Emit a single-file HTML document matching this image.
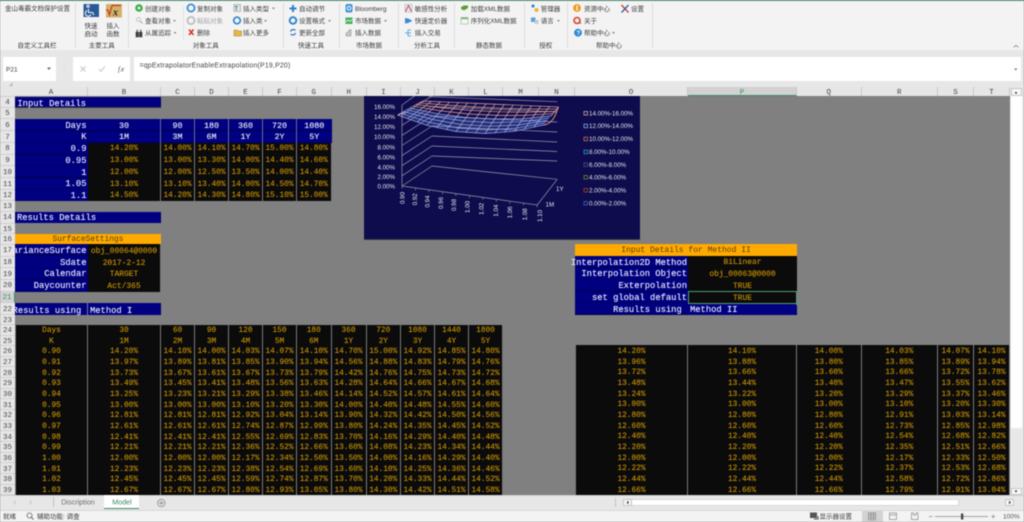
<!DOCTYPE html>
<html><head><meta charset="utf-8"><style>
html,body{margin:0;padding:0;width:1024px;height:522px;overflow:hidden;background:#808080}
#w{position:relative;width:1024px;height:522px;overflow:hidden;filter:blur(.45px);font-family:"Liberation Mono",monospace}
#w div{position:absolute;box-sizing:border-box}
.n{background:#000080;color:#f0f0ff;font-size:8.8px;white-space:nowrap;padding-top:1.5px;-webkit-text-stroke:.1px #f0f0ff}
.k{background:#0b0b0b;color:#cb9405;font-size:7.8px;text-align:center;white-space:pre-line;border-right:1px solid #7a7a7a;-webkit-text-stroke:.1px #cb9405}
.t{top:324.7px;height:170.3px;line-height:10.67px;padding-top:1.4px}
.r{top:345px;height:150px;line-height:10.67px;padding-top:2.1px}
.u{top:143px;height:58px;line-height:11.75px;padding-top:1.3px}
.o{background:#ffaa00;color:#5a3e00;font-size:7.9px;text-align:center;padding-top:1.2px}
.rh{left:0;width:15px;background:#e6e6e6;color:#444;font-size:7.5px;text-align:center;border-bottom:1px solid #cfcfcf;padding-top:1.4px}
.ch{top:87px;height:9px;background:#e6e6e6;color:#444;font-size:7.5px;line-height:12px;text-align:center;border-right:1px solid #c8c8c8}
svg{position:absolute;left:0;top:0;overflow:visible}
.zh text{font-family:"Liberation Sans","Noto Sans CJK SC",sans-serif;font-size:6.5px;fill:#3c3c3c}
</style></head><body><div id="w">

<!-- ribbon -->
<div style="left:0;top:0;width:1024px;height:50px;background:#f3f3f3"></div>
<div style="left:0;top:0;width:1024px;height:1px;background:#5f9c80"></div>
<div style="left:0;top:50px;width:1024px;height:37px;background:#e7e7e7"></div>
<div style="left:3px;top:57px;width:53px;height:24px;background:#fff"></div>
<div style="left:73px;top:57px;width:57px;height:24px;background:#fff"></div>
<div style="left:133.5px;top:57px;width:887px;height:24px;background:#fff"></div>

<svg width="1024" height="96" class="zh">
 <g stroke="#dcdcdc" stroke-width="1"><path d="M75.5 3V48M128.5 3V48M283.5 3V48M339.5 3V48M398.5 3V48M454.5 3V48M524.5 3V48M567.5 3V48M652.5 3V48"/></g>
 <path d="M183.5 6V40M64.5 66V71" stroke="#e2e2e2"/>
 <text x="5" y="10.5">金山毒霸文档保护设置</text>
 <g text-anchor="middle">
  <text x="37" y="47.5">自定义工具栏</text><text x="101.7" y="47.5">主要工具</text><text x="205.7" y="47.5">对象工具</text><text x="311" y="47.5">快速工具</text><text x="369" y="47.5">市场数据</text><text x="427" y="47.5">分析工具</text><text x="489" y="47.5">静态数据</text><text x="545.7" y="47.5">授权</text><text x="609" y="47.5">帮助中心</text>
  <text x="91" y="27.8">快速</text><text x="91" y="36.2">启动</text><text x="113" y="27.8">插入</text><text x="113" y="36.2">函数</text>
 </g>
 <text x="145" y="10.8">创建对象</text><text x="145" y="23">查看对象</text><text x="145" y="35">从属追踪</text>
 <text x="197" y="10.8">复制对象</text><text x="197" y="23" style="fill:#a5a5a5">粘贴对象</text><text x="197" y="35">删除</text>
 <text x="243" y="10.8">插入类型</text><text x="243" y="23">插入类</text><text x="243" y="35">插入更多</text>
 <text x="299" y="10.8">自动调节</text><text x="299" y="23">设置格式</text><text x="299" y="35">更新全部</text>
 <text x="355" y="10.8">Bloomberg</text><text x="355" y="23">市场数据</text><text x="355" y="35">插入数据</text>
 <text x="414.7" y="10.8">敏感性分析</text><text x="414.7" y="23">快速定价器</text><text x="414.7" y="35">插入交易</text>
 <text x="470.7" y="10.8">加载XML数据</text><text x="470.7" y="23">序列化XML数据</text>
 <text x="540.7" y="10.8">管理器</text><text x="540.7" y="23">语言</text>
 <text x="584" y="10.8">资源中心</text><text x="584" y="23">关于</text><text x="584" y="35">帮助中心</text>
 <text x="631" y="10.8">设置</text>
 <g fill="#8a8a8a"><path d="M173 20l3 0-1.500 2zM173.500 32l3 0-1.500 2zM272 7.500l3 0-1.500 2zM264 20l3 0-1.500 2zM328 20l3 0-1.500 2zM384 20l3 0-1.500 2zM557 20l3 0-1.500 2zM612 32l3 0-1.500 2zM47 68l3.500 0-1.750 2z"/></g>
 <rect x="83.500" y="4" width="15.500" height="13" fill="#2a5a96"/>
 <path d="M88 7.500a1.200 1.200 0 1 1 .1 0M88.500 9v3.500h4l1.500 2.500M87 10.500a3 3 0 1 0 4 4" stroke="#eef3fa" stroke-width="1.100" fill="none"/>
 <rect x="106" y="4" width="16" height="13.500" fill="#d6b06a"/>
 <path d="M106 10h2l1.500 5 2.500-9.500h9" stroke="#b8431c" stroke-width="1.200" fill="none"/>
 <text x="113" y="15.500" style="font-family:'Liberation Serif',serif;font-size:10px;font-weight:bold;font-style:italic;fill:#2a2a10">x</text>
 <circle cx="139" cy="8" r="3.800" fill="#3fae49"/><circle cx="139" cy="8" r="1.400" fill="#e8f7ea"/>
 <circle cx="138.500" cy="19.500" r="2" fill="none" stroke="#bcc7d2"/><path d="M140 21l2.500 2.500" stroke="#b0b0b0" stroke-width="1.200"/>
 <path d="M136 37v-5h2.500v5zM139.500 37v-5h2.500v5zM137 32v-2h1M141 32v-2h-1" fill="#3a3a3a" stroke="#3a3a3a" stroke-width=".6"/>
 <circle cx="191" cy="8" r="3.600" fill="none" stroke="#3c8fd6" stroke-width="1.800"/>
 <circle cx="191" cy="20.500" r="3.600" fill="none" stroke="#bdbdbd" stroke-width="1.800"/>
 <path d="M189 29.500l4.500 5.500M193.500 29.500l-4.500 5.500" stroke="#d8301f" stroke-width="1.500"/>
 <rect x="234" y="4.500" width="6.500" height="7" fill="#e6e6e6" stroke="#9a9a9a" stroke-width=".6"/><text x="234.500" y="10.500" style="font-size:6px;fill:#2d7f8a;font-weight:bold">T</text>
 <circle cx="237" cy="20.500" r="3.300" fill="none" stroke="#2f84d0" stroke-width="1.700"/>
 <path d="M234 30h3l1 1h3.500v5H234z" fill="#e4b64e" stroke="#a87c1f" stroke-width=".5"/>
 <path d="M293 5v7M289.500 8.500h7" stroke="#2e7fd0" stroke-width="2"/>
 <circle cx="293" cy="20.500" r="3.300" fill="none" stroke="#2f84d0" stroke-width="1.900"/>
 <path d="M290.500 31.500a3 3 0 0 1 5-1M295.500 33a3 3 0 0 1-5 1" stroke="#2b78c8" stroke-width="1.200" fill="none"/>
 <rect x="345.500" y="4" width="7" height="8.500" rx="2" fill="#3d92d8"/><circle cx="349" cy="8.200" r="1.800" fill="none" stroke="#fff"/>
 <rect x="345.500" y="17.500" width="7" height="6.500" fill="#45b05a"/><path d="M346 22l2-2 2 1.500 2-2" stroke="#fff" stroke-width=".7" fill="none"/>
 <path d="M346 36v-3l2-1 1-2 2-.5v6.500z" fill="#c6c6c6" stroke="#888" stroke-width=".5"/>
 <rect x="405" y="4.500" width="7" height="7.500" fill="#e8e8f2" stroke="#9aa0c0" stroke-width=".5"/><path d="M405.500 11.500l3-6 3 6" stroke="#c8403a" fill="none" stroke-width=".9"/>
 <path d="M405 18l3 .5 3 1.500 1.500 .7-1.500 .8-3 1.500-3 .5z" fill="#3c88d4"/>
 <path d="M405 33h3M408 30v6M408 30h3M408 36h3M408 33h3" stroke="#62a8de" stroke-width="1" fill="none"/>
 <path d="M461 7l3-1.500h4v2.500l-4 2.500-3-1.500z" fill="#5d9e38"/>
 <rect x="461" y="17.500" width="7" height="6.500" fill="#f4f4f4" stroke="#a9a9a9" stroke-width=".6"/><rect x="461" y="17.500" width="7" height="1.600" fill="#6fb36a"/>
 <circle cx="533" cy="6" r="1.600" fill="#2f8ad6"/><circle cx="536.500" cy="10" r="2" fill="#e9b33c"/>
 <rect x="531" y="17.500" width="4.500" height="4.500" fill="#5aa1d8"/><rect x="534.500" y="20" width="4" height="4" fill="#c2ccd6"/>
 <circle cx="577" cy="8" r="3.900" fill="#ee9a1e"/><rect x="576.400" y="5.500" width="1.200" height="5" fill="#fff"/>
 <circle cx="577" cy="20.500" r="3" fill="none" stroke="#d8432d" stroke-width="1.600"/><path d="M579 22l2 1.500" stroke="#d8432d" stroke-width="1.300"/>
 <circle cx="578" cy="32.700" r="3.900" fill="#2e88d4"/><text x="576.500" y="35" style="font-size:6px;fill:#fff;font-weight:bold">?</text>
 <path d="M621.500 5l7 7.500" stroke="#d8362a" stroke-width="1.300"/><path d="M628.500 5l-7 7.500" stroke="#2a62b0" stroke-width="1.300"/>
 <path d="M1013.500 47.500l2.500-2.200 2.500 2.200" stroke="#8a8a8a" fill="none" stroke-width=".8"/>
 <text x="6" y="71.500" style="font-size:6.500px">P21</text>
 <path d="M47.500 67.500h3.500l-1.750 2z" fill="#666"/>
 <path d="M80.500 66.500l5 5M85.500 66.500l-5 5" stroke="#c2c2c2" stroke-width=".9"/>
 <path d="M99 69l2 2.300 4-5" stroke="#c2c2c2" stroke-width=".9" fill="none"/>
 <text x="118" y="71.500" style="font-family:'Liberation Serif',serif;font-style:italic;font-size:7px;fill:#555">f𝑥</text>
 <text x="139.500" y="67.400" style="font-size:6.900px;fill:#444;letter-spacing:.22px">=qpExtrapolatorEnableExtrapolation(P19,P20)</text>
 <path d="M1014 68.500h3.500l-1.750 2z" fill="#777"/>
 <path d="M9 86l3.500-3.500V86z" fill="#b4b4b4"/>
</svg>

<!-- column headers -->
<div style="left:0;top:87px;width:15px;height:9px;background:#e6e6e6"></div>
<div class="ch" style="left:15px;width:73px">A</div><div class="ch" style="left:88px;width:73px">B</div><div class="ch" style="left:161px;width:34px">C</div><div class="ch" style="left:195px;width:34px">D</div><div class="ch" style="left:229px;width:34px">E</div><div class="ch" style="left:263px;width:34px">F</div><div class="ch" style="left:297px;width:34.500px">G</div><div class="ch" style="left:331.500px;width:35.500px">H</div><div class="ch" style="left:367px;width:34px">I</div><div class="ch" style="left:401px;width:34px">J</div><div class="ch" style="left:435px;width:34px">K</div><div class="ch" style="left:469px;width:34px">L</div><div class="ch" style="left:503px;width:36px">M</div><div class="ch" style="left:539px;width:36px">N</div><div class="ch" style="left:575px;width:113px">O</div>
<div class="ch" style="left:688px;width:109px;background:#d2d2d2;color:#3d8a62;border-bottom:1px solid #3d8a62">P</div>
<div class="ch" style="left:797px;width:64.500px">Q</div><div class="ch" style="left:861.500px;width:76.500px">R</div><div class="ch" style="left:938px;width:36px">S</div><div class="ch" style="left:974px;width:36px">T</div>

<!-- gray sheet -->
<div style="left:15px;top:96px;width:995px;height:399px;background:#808080"></div>

<!-- input details -->
<div class="n" style="left:15px;top:97px;width:146px;height:11px;line-height:11px;padding-left:2.400px;border-bottom:1px solid #3a3a3a">Input Details</div>
<div class="n" style="left:15px;top:119px;width:73px;height:82px;text-align:right;padding-right:1.500px;line-height:11.750px;white-space:pre-line;background-image:repeating-linear-gradient(#000080 0 11px,#00004c 11px 11.750px)">Days
K
0.9
0.95
1
1.05
1.1</div>
<div class="n" style="left:88px;top:119px;width:243.500px;height:24px;padding:0;background-image:repeating-linear-gradient(#000080 0 11px,#00004c 11px 11.750px)"></div>
<div class="n" style="left:88px;top:119px;width:73px;height:24px;text-align:center;font-size:8.400px;line-height:11.750px;white-space:pre-line;background:none;border-right:1px solid #6a6a90">30
1M</div>
<div class="n" style="left:161px;top:119px;width:34px;height:24px;text-align:center;font-size:8.400px;line-height:11.750px;white-space:pre-line;background:none;border-right:1px solid #6a6a90">90
3M</div>
<div class="n" style="left:195px;top:119px;width:34px;height:24px;text-align:center;font-size:8.400px;line-height:11.750px;white-space:pre-line;background:none;border-right:1px solid #6a6a90">180
6M</div>
<div class="n" style="left:229px;top:119px;width:34px;height:24px;text-align:center;font-size:8.400px;line-height:11.750px;white-space:pre-line;background:none;border-right:1px solid #6a6a90">360
1Y</div>
<div class="n" style="left:263px;top:119px;width:34px;height:24px;text-align:center;font-size:8.400px;line-height:11.750px;white-space:pre-line;background:none;border-right:1px solid #6a6a90">720
2Y</div>
<div class="n" style="left:297px;top:119px;width:34.500px;height:24px;text-align:center;font-size:8.400px;line-height:11.750px;white-space:pre-line;background:none">1080
5Y</div>
<div class="k u" style="left:88px;width:73px">14.20%
13.00%
12.00%
13.10%
14.50%</div>
<div class="k u" style="left:161px;width:34px">14.00%
13.00%
12.00%
13.10%
14.20%</div>
<div class="k u" style="left:195px;width:34px">14.10%
13.30%
12.50%
13.40%
14.30%</div>
<div class="k u" style="left:229px;width:34px">14.70%
14.00%
13.50%
14.00%
14.80%</div>
<div class="k u" style="left:263px;width:34px">15.00%
14.40%
14.00%
14.50%
15.10%</div>
<div class="k u" style="left:297px;width:34.500px">14.80%
14.60%
14.40%
14.70%
15.00%</div>

<!-- results details -->
<div class="n" style="left:15px;top:211.500px;width:146px;height:11.500px;line-height:11.500px;padding-left:2px">Results Details</div>
<div class="o" style="left:15px;top:233.500px;width:146px;height:10.500px;line-height:10px">SurfaceSettings</div>
<div class="n" style="left:15px;top:244px;width:73px;height:47.500px;overflow:hidden;line-height:11.750px;padding-top:0;background-image:repeating-linear-gradient(#000080 0 11px,#00004c 11px 11.750px)"><div style="right:1.500px;top:1.800px;text-align:right;white-space:pre-line">VarianceSurface
Sdate
Calendar
Daycounter</div></div>
<div class="k" style="left:88px;top:244px;width:73px;height:47.500px;line-height:11.750px;padding-top:1.800px;font-size:7.900px">obj_00064@0000
2017-2-12
TARGET
Act/365</div>
<div class="n" style="left:15px;top:303px;width:73px;height:12px;line-height:12px;overflow:hidden;padding-top:0;border-right:1px solid #7a7a9a"><div style="right:.5px;top:1.500px">Results using&nbsp;</div></div>
<div class="n" style="left:88px;top:303px;width:73px;height:12px;line-height:12px;padding-left:2px">Method I</div>

<!-- method 1 table -->
<div class="k t" style="left:15px;width:73px;border-left:1px solid #7a7a7a">Days
K
0.90
0.91
0.92
0.93
0.94
0.95
0.96
0.97
0.98
0.99
1.00
1.01
1.02
1.03</div>
<div class="k t" style="left:88px;width:73px">30
1M
14.20%
13.97%
13.73%
13.49%
13.25%
13.00%
12.81%
12.61%
12.41%
12.21%
12.00%
12.23%
12.45%
12.67%</div>
<div class="k t" style="left:161px;width:34px">60
2M
14.10%
13.89%
13.67%
13.45%
13.23%
13.00%
12.81%
12.61%
12.41%
12.21%
12.00%
12.23%
12.45%
12.67%</div>
<div class="k t" style="left:195px;width:34px">90
3M
14.00%
13.81%
13.61%
13.41%
13.21%
13.00%
12.81%
12.61%
12.41%
12.21%
12.00%
12.23%
12.45%
12.67%</div>
<div class="k t" style="left:229px;width:34px">120
4M
14.03%
13.85%
13.67%
13.48%
13.29%
13.10%
12.92%
12.74%
12.55%
12.36%
12.17%
12.38%
12.59%
12.80%</div>
<div class="k t" style="left:263px;width:34px">150
5M
14.07%
13.90%
13.73%
13.56%
13.38%
13.20%
13.04%
12.87%
12.69%
12.52%
12.34%
12.54%
12.74%
12.93%</div>
<div class="k t" style="left:297px;width:34.500px">180
6M
14.10%
13.94%
13.79%
13.63%
13.46%
13.30%
13.14%
12.99%
12.83%
12.66%
12.50%
12.69%
12.87%
13.05%</div>
<div class="k t" style="left:331.500px;width:35px">360
1Y
14.70%
14.56%
14.42%
14.28%
14.14%
14.00%
13.90%
13.80%
13.70%
13.60%
13.50%
13.60%
13.70%
13.80%</div>
<div class="k t" style="left:366.500px;width:34.500px">720
2Y
15.00%
14.88%
14.76%
14.64%
14.52%
14.40%
14.32%
14.24%
14.16%
14.08%
14.00%
14.10%
14.20%
14.30%</div>
<div class="k t" style="left:401px;width:34px">1080
3Y
14.92%
14.83%
14.75%
14.66%
14.57%
14.48%
14.42%
14.35%
14.29%
14.23%
14.16%
14.25%
14.33%
14.42%</div>
<div class="k t" style="left:435px;width:34px">1440
4Y
14.85%
14.79%
14.73%
14.67%
14.61%
14.55%
14.50%
14.45%
14.40%
14.34%
14.29%
14.36%
14.44%
14.51%</div>
<div class="k t" style="left:469px;width:34px">1800
5Y
14.80%
14.76%
14.72%
14.68%
14.64%
14.60%
14.56%
14.52%
14.48%
14.44%
14.40%
14.46%
14.52%
14.58%</div>

<!-- chart -->
<div style="left:363.500px;top:96px;width:276.500px;height:144px;background:#0e0c4c;overflow:hidden;border-bottom:1px solid #3a3a3a">
<svg width="277" height="144" viewBox="363.500 96 277 144" style="font-family:'Liberation Sans',sans-serif">
 <g stroke="#9a9ab0" stroke-width=".7" fill="none">
  <path d="M401.500 105L428 86M401.500 115.200L431.500 96M401.500 125.300L431.500 106M401.500 135.400L431.500 116M401.500 145.500L431.500 126M401.500 155.600L431.500 136M401.500 165.700L431.500 146M401.500 175.800L431.500 156M401.500 186L431.500 166"/>
  <path d="M428 96.700L556.700 101.700M431.500 106.500L556.700 112M431.500 116L556.700 122M431.500 126L556.700 132M431.500 136L556.700 142M431.500 146L556.700 151.500M431.500 156L556.700 161M431.500 166L556.700 179.300"/>
  <path d="M401.500 105V186M401.500 186L536.700 205L556.700 179.300"/>
 </g>
 <path d="M401.700 186.500v2M415 188.400v2M428.500 190.300v2M442 192.200v2M455.300 194v2M469 196v2M482.300 197.800v2M495.800 199.700v2M509.300 201.600v2M523 203.500v2M536.700 205.300v2" stroke="#9d9db4" stroke-width=".6"/>
 <path d="M409.500 108L437.600 113.800L465.700 117.500L494.100 119L522.400 118.600L550.500 116L543 125L513.800 131.300L484.600 133.500L455.400 131.500L426.200 125.300L397 115z" fill="#6f8fdc" fill-opacity=".24"/>
 <g stroke="#e8a296" stroke-width=".7" fill="none">
  <path d="M422 101L449 102.200L476 103.400L503.600 104.600L531 105.800L558 107"/>
  <path d="M418.800 102.800L446.100 105.100L473.400 106.900L501.200 108.200L528.800 109L556 109.200"/>
  <path d="M415.700 104.500L443.300 108L470.800 110.400L498.800 111.800L526.700 112.200L554.200 111.500"/>
  <path d="M412.600 106.200L440.400 110.900L468.200 114L496.400 115.400L524.500 115.400L552.300 113.700"/>
  <path d="M422 101L409.500 108M431 101.400L418.900 110.200M440 101.800L428.300 112M449 102.200L437.600 113.800M458 102.600L447 115.300M467 103L456.400 116.500M476 103.400L465.700 117.500M485.500 103.800L475.300 118.300M494.500 104.200L484.700 118.700M503.600 104.600L494.100 119M512.700 105L503.500 119.200M521.800 105.400L512.900 119M531 105.800L522.400 118.600M540 106.200L531.800 118M549 106.600L541.100 117M558 107L550.500 116"/>
 </g>
 <g stroke="#94aaf0" stroke-width=".7" fill="none">
  <path d="M409.500 108L437.600 113.800L465.700 117.500L494.100 119L522.400 118.600L550.500 116"/>
  <path d="M406.300 109.700L434.700 116.600L463.100 121L491.700 122.600L520.200 121.800L548.600 118.200"/>
  <path d="M403.200 111.500L431.900 119.500L460.500 124.500L489.300 126.200L518.100 125L546.700 120.500"/>
  <path d="M400 113.200L429 122.400L458 128L487 129.900L516 128.200L544.800 122.700"/>
  <path d="M397 115L426.200 125.300L455.400 131.500L484.600 133.500L513.800 131.300L543 125"/>
  <path d="M409.500 108L397 115M418.900 110.200L406.700 118.900M428.300 112L416.500 122.300M437.600 113.800L426.200 125.300M447 115.300L436 127.900M456.400 116.500L445.700 129.900M465.700 117.500L455.400 131.500M475.300 118.300L465.100 132.700M484.700 118.700L474.800 133.200M494.100 119L484.600 133.500M503.500 119.200L494.300 133.300M512.900 119L504 132.500M522.400 118.600L513.800 131.300M531.800 118L523.500 129.700M541.100 117L533.200 127.500"/>
 </g>
 <path d="M543 125Q552 124 556 112L558 107" stroke="#e8a296" stroke-width=".9" fill="none"/>
 <path d="M397 115L405 112" stroke="#e8a296" stroke-width=".9"/>
 <g fill="#e4e4ee" font-size="6.200" text-anchor="end">
  <text x="394.500" y="108.800">16.00%</text><text x="394.500" y="119">14.00%</text><text x="394.500" y="129.100">12.00%</text><text x="394.500" y="139.200">10.00%</text><text x="394.500" y="149.300">8.00%</text><text x="394.500" y="159.400">6.00%</text><text x="394.500" y="169.500">4.00%</text><text x="394.500" y="179.200">2.00%</text><text x="394.500" y="188.300">0.00%</text>
 </g>
 <g fill="#e4e4ee" font-size="6.200" text-anchor="middle">
  <text transform="translate(403.800 198) rotate(-90)">0.90</text><text transform="translate(416.300 199.300) rotate(-90)">0.92</text><text transform="translate(429 201.500) rotate(-90)">0.94</text><text transform="translate(442.300 203) rotate(-90)">0.96</text><text transform="translate(455.500 205) rotate(-90)">0.98</text><text transform="translate(469 207) rotate(-90)">1.00</text><text transform="translate(483 208.800) rotate(-90)">1.02</text><text transform="translate(497.300 210.600) rotate(-90)">1.04</text><text transform="translate(511.600 212.300) rotate(-90)">1.06</text><text transform="translate(526.300 214.300) rotate(-90)">1.08</text><text transform="translate(541.300 216) rotate(-90)">1.10</text>
 </g>
 <g fill="#e4e4ee" font-size="6.200">
  <text x="545" y="206.500">1M</text><text x="555.500" y="191">1Y</text>
  <text x="588.500" y="115.500">14.00%-16.00%</text><text x="588.500" y="128.200">12.00%-14.00%</text><text x="588.500" y="141.200">10.00%-12.00%</text><text x="588.500" y="154.200">8.00%-10.00%</text><text x="588.500" y="166.900">6.00%-8.00%</text><text x="588.500" y="179.500">4.00%-6.00%</text><text x="588.500" y="192.500">2.00%-4.00%</text><text x="588.500" y="205.500">0.00%-2.00%</text>
 </g>
 <g fill="none" stroke-width=".8">
  <rect x="583.500" y="111.500" width="3.500" height="3.500" stroke="#d9a8a8"/><rect x="583.500" y="124.200" width="3.500" height="3.500" stroke="#8fa6ea"/><rect x="583.500" y="137.200" width="3.500" height="3.500" stroke="#c0765a"/><rect x="583.500" y="150.200" width="3.500" height="3.500" stroke="#3c9ac0"/><rect x="583.500" y="162.900" width="3.500" height="3.500" stroke="#5a4a8c"/><rect x="583.500" y="175.500" width="3.500" height="3.500" stroke="#6a8a3c"/><rect x="583.500" y="188.500" width="3.500" height="3.500" stroke="#a0403c"/><rect x="583.500" y="201.500" width="3.500" height="3.500" stroke="#3c68b4"/>
 </g>
</svg></div>

<!-- method 2 settings -->
<div class="o" style="left:575px;top:243.500px;width:222px;height:12px;line-height:11px;font-size:8px">Input Details for Method II</div>
<div class="n" style="left:575px;top:255.500px;width:113px;height:59px;line-height:11.750px;padding:0;background-image:repeating-linear-gradient(#000080 0 11px,#00004c 11px 11.750px)"></div>
<div style="right:337px;top:257.500px;text-align:right;white-space:pre-line;line-height:11.750px;color:#f0f0ff;font-size:8.800px;-webkit-text-stroke:.1px #f0f0ff">Interpolation2D Method
Interpolation Object
Exterpolation
set global default
Results using&nbsp;</div>
<div class="k" style="left:688px;top:255.500px;width:109px;height:47px;line-height:11.750px;padding-top:1.800px;font-size:7.900px;border-right:0">BiLinear
obj_00063@0000
TRUE
TRUE</div>
<div class="n" style="left:688px;top:303px;width:109px;height:11.500px;line-height:11.500px;padding-left:2px">Method II</div>
<div style="left:688px;top:291px;width:109px;height:12.500px;border:1.200px solid #4e9e78"></div>
<div style="left:795.500px;top:302px;width:2.500px;height:2.500px;background:#4e9e78"></div>

<!-- method 2 table -->
<div class="k r" style="left:575px;width:113px;border-left:1px solid #7a7a7a">14.20%
13.96%
13.72%
13.48%
13.24%
13.00%
12.80%
12.60%
12.40%
12.20%
12.00%
12.22%
12.44%
12.66%</div>
<div class="k r" style="left:688px;width:109px">14.10%
13.88%
13.66%
13.44%
13.22%
13.00%
12.80%
12.60%
12.40%
12.20%
12.00%
12.22%
12.44%
12.66%</div>
<div class="k r" style="left:797px;width:64.500px">14.00%
13.80%
13.60%
13.40%
13.20%
13.00%
12.80%
12.60%
12.40%
12.20%
12.00%
12.22%
12.44%
12.66%</div>
<div class="k r" style="left:861.500px;width:76.500px">14.03%
13.85%
13.66%
13.47%
13.29%
13.10%
12.91%
12.73%
12.54%
12.35%
12.17%
12.37%
12.58%
12.79%</div>
<div class="k r" style="left:938px;width:36px">14.07%
13.89%
13.72%
13.55%
13.37%
13.20%
13.03%
12.85%
12.68%
12.51%
12.33%
12.53%
12.72%
12.91%</div>
<div class="k r" style="left:974px;width:36px">14.10%
13.94%
13.78%
13.62%
13.46%
13.30%
13.14%
12.98%
12.82%
12.66%
12.50%
12.68%
12.86%
13.04%</div>

<!-- row headers -->
<div class="rh" style="top:97px;height:11px;line-height:11px">4</div><div class="rh" style="top:108px;height:11px;line-height:11px">5</div><div class="rh" style="top:119px;height:12px;line-height:12px">6</div><div class="rh" style="top:131px;height:12px;line-height:12px">7</div><div class="rh" style="top:143px;height:11.500px;line-height:11.500px">8</div><div class="rh" style="top:154.500px;height:11.500px;line-height:11.500px">9</div><div class="rh" style="top:166px;height:12px;line-height:12px">10</div><div class="rh" style="top:178px;height:12px;line-height:12px">11</div><div class="rh" style="top:190px;height:11px;line-height:11px">12</div><div class="rh" style="top:201px;height:11px;line-height:11px">13</div><div class="rh" style="top:212px;height:11.500px;line-height:11.500px">14</div><div class="rh" style="top:223.500px;height:10.500px;line-height:10.500px">15</div><div class="rh" style="top:234px;height:11px;line-height:11px">16</div><div class="rh" style="top:245px;height:11.500px;line-height:11.500px">17</div><div class="rh" style="top:256.500px;height:11.500px;line-height:11.500px">18</div><div class="rh" style="top:268px;height:12px;line-height:12px">19</div><div class="rh" style="top:280px;height:11.500px;line-height:11.500px">20</div>
<div class="rh" style="top:291.500px;height:11.500px;line-height:11.500px;background:#d2d2d2;color:#3d8a62;border-right:1px solid #3d8a62">21</div>
<div class="rh" style="top:303px;height:12px;line-height:12px">22</div><div class="rh" style="top:315px;height:10px;line-height:10px">23</div><div class="rh" style="top:325px;height:10.500px;line-height:10.500px">24</div><div class="rh" style="top:335.500px;height:10.500px;line-height:10.500px">25</div><div class="rh" style="top:346px;height:10.700px;line-height:10.700px">26</div><div class="rh" style="top:356.700px;height:10.600px;line-height:10.600px">27</div><div class="rh" style="top:367.300px;height:10.700px;line-height:10.700px">28</div><div class="rh" style="top:378px;height:10.700px;line-height:10.700px">29</div><div class="rh" style="top:388.700px;height:10.600px;line-height:10.600px">30</div><div class="rh" style="top:399.300px;height:10.700px;line-height:10.700px">31</div><div class="rh" style="top:410px;height:10.700px;line-height:10.700px">32</div><div class="rh" style="top:420.700px;height:10.600px;line-height:10.600px">33</div><div class="rh" style="top:431.300px;height:10.700px;line-height:10.700px">34</div><div class="rh" style="top:442px;height:10.700px;line-height:10.700px">35</div><div class="rh" style="top:452.700px;height:10.600px;line-height:10.600px">36</div><div class="rh" style="top:463.300px;height:10.700px;line-height:10.700px">37</div><div class="rh" style="top:474px;height:10.700px;line-height:10.700px">38</div><div class="rh" style="top:484.700px;height:10.300px;line-height:10.300px">39</div>
<div style="left:0;top:96px;width:15px;height:1px;background:#cfcfcf"></div>

<!-- vertical scrollbar -->
<div style="left:1010px;top:87px;width:14px;height:408px;background:#e8e8e8"></div>
<div style="left:1011px;top:96px;width:11px;height:332px;background:#fff"></div>
<div style="left:1011px;top:88px;width:11px;height:8px;background:#f8f8f8;border:1px solid #c6c6c6"></div>
<div style="left:1011px;top:488px;width:11px;height:7px;background:#f8f8f8;border:1px solid #c6c6c6"></div>

<!-- tabs + status -->
<div style="left:0;top:495px;width:1024px;height:15px;background:#e7e7e7;border-top:1px solid #cfcfcf"></div>
<div style="left:104px;top:495px;width:35px;height:14px;background:#fff;border-bottom:1.500px solid #3d8a62"></div>
<div style="left:623px;top:499px;width:336px;height:7px;background:#fff;border:1px solid #d8d8d8"></div>
<div style="left:623px;top:499px;width:9px;height:7px;background:#f6f6f6;border:1px solid #c6c6c6"></div>
<div style="left:1005px;top:499px;width:9px;height:7px;background:#f6f6f6;border:1px solid #c6c6c6"></div>
<div style="left:0;top:510px;width:1024px;height:12px;background:#f3f3f3;border-top:1px solid #d8d8d8"></div>
<div style="left:861.500px;top:511px;width:21px;height:11px;background:#d3d3d3"></div>
<svg width="1024" height="522" class="zh" style="pointer-events:none">
 <path d="M53.500 497V507M615.500 498V507" stroke="#c2c2c2"/>
 <path d="M16 500.500l-2 2 2 2M29.500 500.500l2 2-2 2" stroke="#c2c2c2" fill="none" stroke-width=".8"/>
 <g text-anchor="middle" style="font-family:'Liberation Sans',sans-serif">
  <text x="78" y="504.500" style="font-size:7.200px;fill:#6d6d6d">Discription</text>
  <text x="122" y="504.500" style="font-size:7.200px;fill:#3d8a62">Model</text>
 </g>
 <circle cx="161.300" cy="503" r="3.700" fill="none" stroke="#7a7a7a" stroke-width=".7"/><path d="M159 503h4.600M161.300 500.700v4.600" stroke="#7a7a7a" stroke-width=".7"/>
 <path d="M1012.500 93.500h3l-1.500-2zM1012.500 490.500h3l-1.500 2z" transform="translate(2 0)" fill="#333"/>
 <path d="M628.500 500.800v3.500l-2-1.750zM1009 500.800v3.500l2-1.750z" fill="#333"/>
 <text x="3" y="518.500">就绪</text>
 <circle cx="29.500" cy="515.500" r="2.500" fill="none" stroke="#666" stroke-width=".8"/><path d="M31 517l2.500 2.500" stroke="#666"/>
 <text x="37" y="518.500">辅助功能: 调查</text>
 <rect x="810" y="512.500" width="7" height="5.500" fill="#555"/><path d="M814 519h4v-3" stroke="#555" fill="none"/>
 <text x="819.500" y="518.700">显示器设置</text>
 <g fill="none" stroke="#8a8a8a" stroke-width=".7">
  <rect x="868.500" y="512.800" width="7" height="7"/><path d="M871 513v7M873.500 513v7M869 515h7M869 517.500h7"/>
  <rect x="889.500" y="513" width="7" height="6.500"/><path d="M889.500 515h7"/>
  <path d="M911.500 519.500v-6.500h2v2h2.500v-2h2v6.500z"/>
 </g>
 <path d="M929 516.500h3.500M991.500 516.500h3.500M993.250 514.800v3.500" stroke="#888" stroke-width=".8"/>
 <path d="M935 516.500h53" stroke="#888" stroke-width=".8"/>
 <rect x="961" y="513.500" width="2.300" height="6" fill="#444"/>
 <text x="1003" y="518.700" style="font-family:'Liberation Sans',sans-serif;font-size:6.500px;fill:#555">100%</text>
</svg>
</div></body></html>
